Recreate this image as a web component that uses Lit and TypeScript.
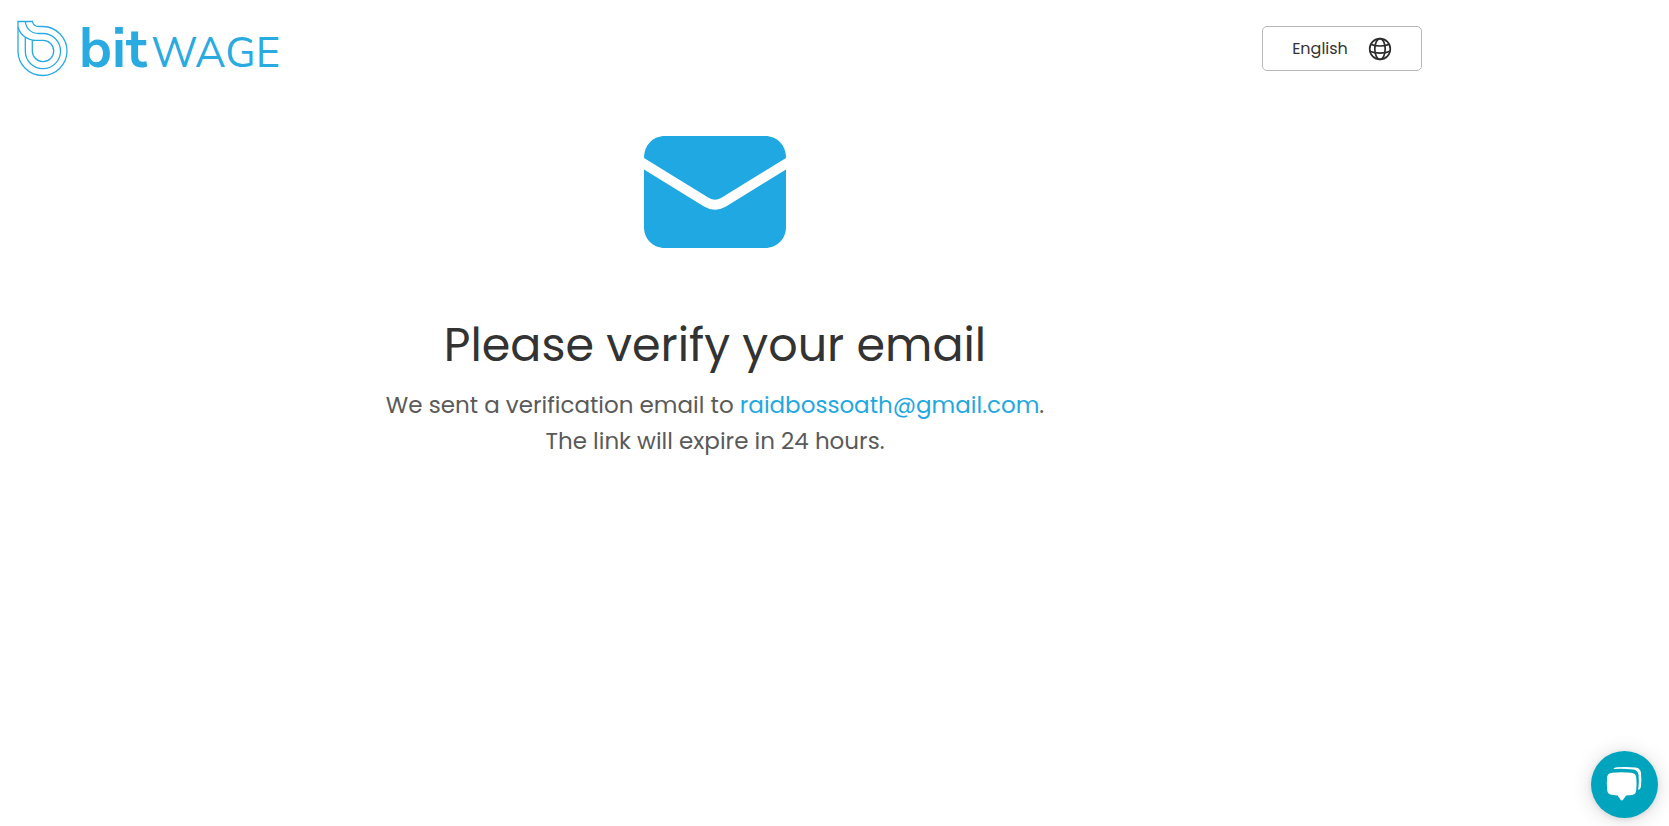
import { LitElement, html, css } from "lit";
import { customElement, property } from "lit/decorators.js";

@customElement("bitwage-logo")
class BitwageLogo extends LitElement {
  static styles = css`
    :host {
      display: block;
    }
    .logo {
      display: flex;
      align-items: center;
      gap: 10px;
      color: #29abe2;
      text-decoration: none;
    }
    .mark {
      flex: none;
      width: 52px;
      height: 57px;
    }
    .name {
      display: flex;
      align-items: baseline;
      gap: 4px;
    }
    .bit {
      font-family: "Nunito Sans", Mulish, "Liberation Sans", sans-serif;
      font-size: 55px;
      font-weight: 700;
      line-height: 57px;
    }
    .wage {
      font-family: "Nunito Sans", Mulish, "Open Sans", sans-serif;
      font-size: 42px;
      font-weight: 400;
      line-height: 40px;
    }
  `;

  render() {
    return html`
      <a class="logo" href="#" aria-label="bitwage">
        <svg class="mark" viewBox="17 20 52 57" fill="none" stroke="currentColor" stroke-width="1.3" aria-hidden="true">
          <path d="M18 21.5H32.5C33 25 35.5 26.5 39 26.5H43A24.5 24.5 0 1 1 18 51Z" />
          <path d="M25.3 21.5C26 28.5 31 33.5 39 33.5H43A17.6 17.6 0 1 1 25.3 51V37" />
          <path d="M18 27C20 34.5 27 40.3 36 40.3H43A10.7 10.7 0 1 1 32.3 51V39.8" />
        </svg>
        <span class="name"><span class="bit">bit</span><span class="wage">WAGE</span></span>
      </a>
    `;
  }
}

@customElement("language-button")
class LanguageButton extends LitElement {
  @property() language = "English";

  static styles = css`
    :host {
      display: block;
    }
    .language {
      display: flex;
      align-items: center;
      justify-content: center;
      gap: 20px;
      box-sizing: border-box;
      min-width: 160px;
      height: 45px;
      padding: 0 28px;
      border: 1px solid #b8b8b8;
      border-radius: 5px;
      background: #fff;
      color: #333;
      font: 400 16px/24px Poppins, Inter, sans-serif;
      cursor: pointer;
    }
    .globe {
      width: 24px;
      height: 24px;
    }
  `;

  render() {
    return html`
      <button class="language" type="button" aria-haspopup="listbox">
        <span>${this.language}</span>
        <svg class="globe" viewBox="0 0 24 24" fill="none" stroke="#2d2d2d" stroke-width="1.7" aria-hidden="true">
          <circle cx="12" cy="12" r="10.3" />
          <ellipse cx="12" cy="12" rx="5.2" ry="10.3" />
          <path d="M2.7 7.2C8 9.6 16 9.6 21.3 7.2M1.7 14.2C7.5 16.7 16.5 16.7 22.3 14.2" />
        </svg>
      </button>
    `;
  }
}

@customElement("chat-launcher")
class ChatLauncher extends LitElement {
  static styles = css`
    :host {
      position: fixed;
      right: 11px;
      bottom: 8px;
    }
    .chat {
      display: grid;
      place-items: center;
      width: 67px;
      height: 67px;
      padding: 0;
      border: 0;
      border-radius: 50%;
      background: #00a4bd;
      box-shadow: 0 1px 6px rgba(0, 0, 0, 0.1), 0 2px 20px rgba(0, 0, 0, 0.15);
      cursor: pointer;
    }
    .bubbles {
      width: 67px;
      height: 67px;
    }
  `;

  render() {
    return html`
      <button class="chat" type="button" aria-label="Open chat">
        <svg class="bubbles" viewBox="0 0 67 67" fill="#fff" aria-hidden="true">
          <path d="M21 21.7Q31 20.7 40 21.7Q44.7 22.2 45.2 26Q46 33 45.2 39.5Q44.8 43.5 41 44L35.2 44.5L32.2 48.6Q30.8 50.4 29.4 48.6L26.6 44.5L20.5 43.8Q16.6 43.3 16.2 39.3Q15.4 32 16.2 25.6Q16.7 22.2 21 21.7Z" />
          <path d="M22.5 18C23 16.8 24.5 16.4 26 16.3Q36 15.6 44.5 16.5Q49.5 17 50 22Q50.7 29 50 35Q49.6 38.4 47.2 39Q48.3 31 47.6 24.2Q47 18.8 42 18.4Q32 17.4 22.5 18Z" />
        </svg>
      </button>
    `;
  }
}

@customElement("app-root")
class AppRoot extends LitElement {
  @property() email = "raidbossoath@gmail.com";

  static styles = css`
    :host {
      display: block;
      min-height: 100vh;
      background: #fff;
      font-family: Poppins, Inter, sans-serif;
    }
    .page {
      max-width: 1430px;
    }
    .header {
      display: flex;
      align-items: center;
      justify-content: space-between;
      padding: 20px 8px 0 17px;
    }
    .content {
      display: flex;
      flex-direction: column;
      align-items: center;
      padding: 59px 16px 48px;
      text-align: center;
    }
    .envelope {
      width: 142px;
      height: 112px;
    }
    .title {
      margin: 65px 0 0;
      color: #333;
      font-size: 46px;
      font-weight: 400;
      line-height: 64px;
    }
    .message {
      margin: 10px 0 0;
      color: #5a5a5a;
      font-size: 23px;
      line-height: 36px;
    }
    .email {
      color: #1fa8e1;
      text-decoration: none;
    }
  `;

  render() {
    return html`
      <div class="page">
        <header class="header">
          <bitwage-logo></bitwage-logo>
          <language-button></language-button>
        </header>
        <main class="content">
          <svg class="envelope" viewBox="0 0 142 112" fill="#1fa8e1" aria-hidden="true">
            <path d="M0 22C0 9 9 0 21 0H121C133 0 142 9 142 22L77 62Q71 65.5 65 62Z" />
            <path d="M0 33.5L60 70.5Q71 77 82 70.5L142 33.5V91C142 103 133 112 121 112H21C9 112 0 103 0 91Z" />
          </svg>
          <h1 class="title">Please verify your email</h1>
          <p class="message">
            We sent a verification email to <a class="email" href="mailto:${this.email}">${this.email}</a>.<br />
            The link will expire in 24 hours.
          </p>
        </main>
      </div>
      <chat-launcher></chat-launcher>
    `;
  }
}
